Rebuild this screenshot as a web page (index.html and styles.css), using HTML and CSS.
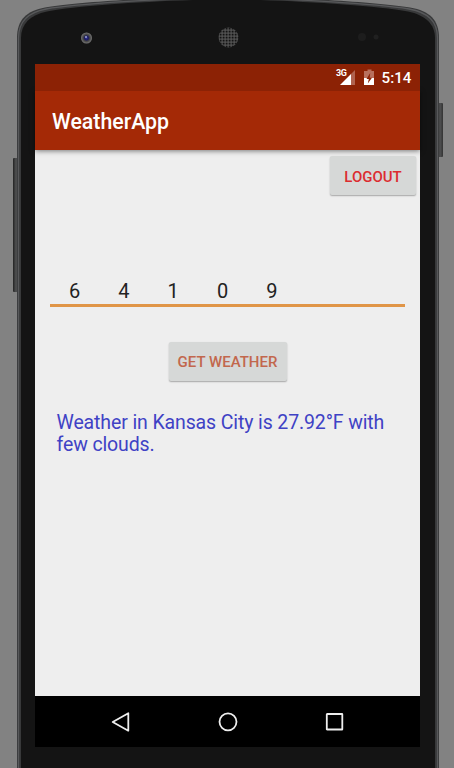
FILE: index.html
```html
<!DOCTYPE html>
<html lang="en">
<head>
<meta charset="utf-8">
<title>WeatherApp</title>
<link rel="stylesheet" href="styles.css">
</head>
<body>
<div class="device">
  <svg class="shell" width="454" height="768" viewBox="0 0 454 768" aria-hidden="true">
    <defs>
      <linearGradient id="key" x1="0" x2="1" y1="0" y2="0"><stop offset="0" stop-color="#222"/><stop offset=".5" stop-color="#505152"/><stop offset="1" stop-color="#333"/></linearGradient>
      <pattern id="mesh" width="3" height="3" patternUnits="userSpaceOnUse"><rect width="3" height="3" fill="#5c5c5c"/><rect x=".6" y=".6" width="2" height="2" fill="#141414"/></pattern>
      <radialGradient id="lens"><stop offset="0" stop-color="#33339a"/><stop offset=".35" stop-color="#1c1c60"/><stop offset=".6" stop-color="#444"/><stop offset="1" stop-color="#777"/></radialGradient>
    </defs>
    <rect x="13" y="158" width="6" height="134" rx="1" fill="url(#key)"/>
    <rect x="437" y="103" width="6" height="54" rx="1" fill="url(#key)"/>
    <path d="M17 768V38C17 19 27 11 45 7.500C75 2 160-3 228-4C290-3 375 2 410 7.500C430 11 439 20 439 38V768Z" fill="#38393a"/>
    <path d="M18.500 768V38C18.500 21 28 12.500 46 9C78 3.500 160-1 228-3C290-1 374 3.500 409 9C428 12.500 437.500 21 437.500 38V768" fill="none" stroke="#58595b" stroke-width="1.300"/>
    <path d="M21 768V38C21 24 30 15 47 11.500C80 5 160 .500 228-1C290 .500 372 5 408 11.500C425 15 435 24 435 38V768Z" fill="#141414"/>
    <circle cx="86.500" cy="38" r="5.500" fill="url(#lens)"/><circle cx="86" cy="37" r="1" fill="#9da5d5"/>
    <circle cx="228.500" cy="37.500" r="10" fill="url(#mesh)"/>
    <circle cx="362" cy="37" r="4" fill="#1d1d1d"/><circle cx="376" cy="37" r="2.500" fill="#202020"/>
  </svg>
  <main class="screen">
    <div class="status">
      <svg class="status-icons" width="40" height="18" viewBox="0 0 40 18">
        <path d="M20 1V16H16V5Z" fill="#b06350"/><path d="M16 5V16H5Z" fill="#fff"/>
        <path d="M32.500 .500h4v1.500h2.500v7h-10V2H32.500Z" fill="#b8705d"/><path d="M29 9h10v7h-10Z" fill="#fff"/><path d="M35.200 4L31.500 10h2.300l-1 4.500L37 8.700h-2.300Z" fill="#8c2205"/>
      </svg>
      <span class="network">3G</span>
      <span class="clock">5:14</span>
    </div>
    <header class="appbar"><h1>WeatherApp</h1></header>
    <section class="content">
      <button class="btn logout">LOGOUT</button>
      <div class="zip"><span>6</span><span>4</span><span>1</span><span>0</span><span>9</span></div>
      <button class="btn get">GET WEATHER</button>
      <p class="result">Weather in Kansas City is 27.92°F with<br>few clouds.</p>
    </section>
    <nav class="nav">
      <svg width="20" height="20" viewBox="0 0 20 20"><path d="M17.300 1.300V18.700L1.700 10Z"/></svg>
      <svg width="20" height="20" viewBox="0 0 20 20"><circle cx="10" cy="9.800" r="8.500"/></svg>
      <svg width="20" height="20" viewBox="0 0 20 20"><rect x="1.800" y="2" width="15.500" height="15.500" rx=".3"/></svg>
    </nav>
  </main>
</div>
</body>
</html>
```
FILE: styles.css
```css
* { box-sizing: border-box; }
body { margin: 0; background: #828282; font-family: Roboto, sans-serif; overflow: hidden; }
.device { position: relative; height: 768px; padding: 64px 34px 21px 35px; }
.shell { position: absolute; top: 0; left: 0; }
.screen { position: relative; height: 683px; background: #eee; display: flex; flex-direction: column; }
.status { position: relative; height: 27px; background: #8c2205; display: flex; align-items: center; justify-content: flex-end; padding-right: 8.5px; gap: 7px; color: #fff; }
.network { position: absolute; left: 301px; top: 5px; font-size: 9px; line-height: 9px; font-weight: 700; letter-spacing: -.5px; }
.clock { font-size: 15.2px; line-height: 27px; padding-top: 1px; font-weight: 500; }
.appbar { height: 59px; flex: none; background: #a42906; display: flex; align-items: center; padding: 2px 0 0 17px; box-shadow: 0 1px 5px rgba(0,0,0,.5); }
h1 { margin: 0; font-size: 21.3px; line-height: 28px; font-weight: 500; color: #fff; }
.content { flex: 1; display: flex; flex-direction: column; align-items: center; }
.btn { border: 0; padding: 0; background: #d6d8d7; border-radius: 2px; box-shadow: 0 1px 1.5px rgba(0,0,0,.3); font-family: Roboto, sans-serif; font-weight: 500; font-size: 15px; height: 39px; }
.logout { width: 86px; align-self: flex-end; margin: 6px 4px 0 0; padding-top: 2px; color: #dc2c30; }
.zip { width: 355px; height: 37px; margin-top: 75px; padding-left: 18px; border-bottom: 3px solid #e09547; display: flex; font-size: 20px; line-height: 42px; color: #222; }
.zip span { width: 49.3px; padding-left: 1px; }
.get { width: 118px; margin-top: 35px; color: #c2674d; }
.result { align-self: flex-start; margin: 31px 0 0 21.5px; font-size: 19.5px; line-height: 22px; letter-spacing: -.12px; color: #3f42c5; white-space: nowrap; }
.nav { height: 51px; background: #000; display: flex; justify-content: center; align-items: center; gap: 87px; }
.nav svg { fill: none; stroke: #eee; stroke-width: 1.8; stroke-linejoin: round; }
```
